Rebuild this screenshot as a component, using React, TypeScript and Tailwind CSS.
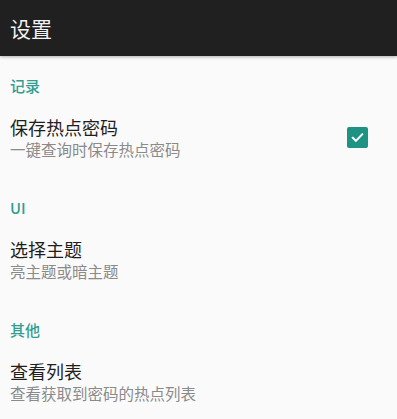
import React from "react";

const font = { fontFamily: '"Noto Sans CJK SC", "Noto Sans", sans-serif' };

function Item({ title, subtitle, checked }: { title: string; subtitle: string; checked?: boolean }) {
  return (
    <div className="flex items-center justify-between pl-[10px] pr-[29px] pt-[19px] pb-[19px]">
      <div className="flex flex-col">
        <div className="text-[18px] leading-[24px] text-[#1f1f1f]">{title}</div>
        <div className="text-[15.5px] leading-[20px] text-[#8a8a8a]">{subtitle}</div>
      </div>
      {checked && (
        <div className="w-[21px] h-[21px] rounded-[2px] bg-[#1e9384] flex items-center justify-center">
          <svg width="15" height="15" viewBox="0 0 24 24" fill="none" stroke="#ffffff" strokeWidth="3.2" strokeLinecap="square">
            <path d="M4.5 12.5l5 5 10-10.5" />
          </svg>
        </div>
      )}
    </div>
  );
}

function Label({ text }: { text: string }) {
  return (
    <div className="pl-[10px] pt-[20px] text-[15px] leading-[20px] text-[#2f9e90] font-medium">{text}</div>
  );
}

export default function App() {
  return (
    <div className="w-[397px] h-[419px] bg-[#fafafa] overflow-hidden" style={font}>
      <div className="h-[56px] bg-[#202020] flex items-center pl-[10px] shadow-[0_1px_3px_rgba(0,0,0,0.3)]">
        <span className="text-[21px] leading-[24px] text-[#f2f2f2]">设置</span>
      </div>
      <Label text="记录" />
      <Item title="保存热点密码" subtitle="一键查询时保存热点密码" checked />
      <Label text="UI" />
      <Item title="选择主题" subtitle="亮主题或暗主题" />
      <Label text="其他" />
      <Item title="查看列表" subtitle="查看获取到密码的热点列表" />
    </div>
  );
}
